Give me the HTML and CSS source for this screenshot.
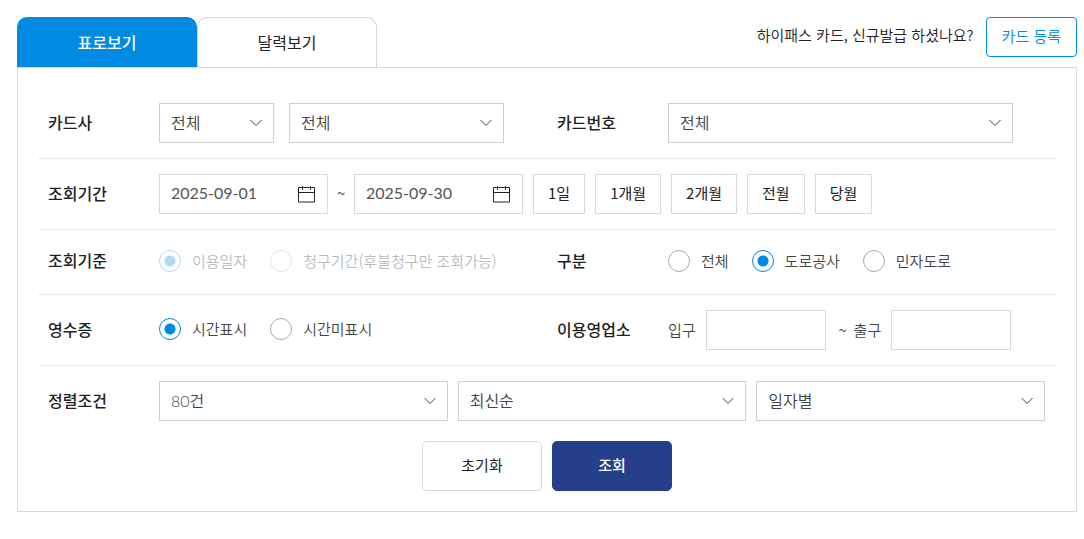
FILE: index.html
```html
<!DOCTYPE html>
<html lang="ko">
<head>
<meta charset="utf-8">
<title>사용내역 조회</title>
<link rel="stylesheet" href="styles.css">
</head>
<body>
<svg class="defs" aria-hidden="true">
  <symbol id="chevron" viewBox="0 0 12 8"><path d="M.5 1 6 6.5 11.5 1" fill="none" stroke="currentColor"/></symbol>
  <symbol id="calendar" viewBox="0 0 17 18"><path d="M.5 2.500h16v14.500H.5zM.5 7.500h16M4.500 1v4M12.500 1v4" fill="none" stroke="currentColor"/></symbol>
</svg>
<main class="page">
  <header class="top">
    <div class="tabs" role="tablist">
      <button class="tab tab-active" type="button" role="tab" aria-selected="true">표로보기</button>
      <button class="tab" type="button" role="tab" aria-selected="false">달력보기</button>
    </div>
    <div class="register">
      <span class="register-text">하이패스 카드, 신규발급 하셨나요?</span>
      <a class="register-link" href="#">카드 등록</a>
    </div>
  </header>
  <form class="panel">
    <div class="row split">
      <div class="field">
        <label class="title" for="company">카드사</label>
        <div class="content pair">
          <div class="select narrow"><select id="company"><option>전체</option></select><svg class="arrow"><use href="#chevron"/></svg></div>
          <div class="select wide"><select aria-label="카드 종류"><option>전체</option></select><svg class="arrow"><use href="#chevron"/></svg></div>
        </div>
      </div>
      <div class="field">
        <label class="title" for="number">카드번호</label>
        <div class="content pair">
          <div class="select wide"><select id="number"><option>전체</option></select><svg class="arrow"><use href="#chevron"/></svg></div>
        </div>
      </div>
    </div>
    <div class="row">
      <div class="field">
        <label class="title" for="from">조회기간</label>
        <div class="content period">
          <div class="date"><input id="from" type="text" value="2025-09-01"><button class="cal" type="button" aria-label="시작일 선택"><svg class="cal-icon"><use href="#calendar"/></svg></button></div>
          <span class="tilde">~</span>
          <div class="date"><input type="text" value="2025-09-30" aria-label="종료일"><button class="cal" type="button" aria-label="종료일 선택"><svg class="cal-icon"><use href="#calendar"/></svg></button></div>
          <div class="quick">
            <button type="button">1일</button>
            <button type="button">1개월</button>
            <button type="button">2개월</button>
            <button type="button">전월</button>
            <button type="button">당월</button>
          </div>
        </div>
      </div>
    </div>
    <div class="row split row-radio">
      <div class="field" role="group" aria-labelledby="t-basis">
        <span class="title" id="t-basis">조회기준</span>
        <div class="content radios">
          <label class="radio"><input type="radio" name="basis" checked disabled><span>이용일자</span></label>
          <label class="radio"><input type="radio" name="basis" disabled><span>청구기간(후불청구만 조회가능)</span></label>
        </div>
      </div>
      <div class="field" role="group" aria-labelledby="t-kind">
        <span class="title" id="t-kind">구분</span>
        <div class="content radios">
          <label class="radio"><input type="radio" name="kind"><span>전체</span></label>
          <label class="radio"><input type="radio" name="kind" checked><span>도로공사</span></label>
          <label class="radio"><input type="radio" name="kind"><span>민자도로</span></label>
        </div>
      </div>
    </div>
    <div class="row split row-receipt">
      <div class="field" role="group" aria-labelledby="t-receipt">
        <span class="title" id="t-receipt">영수증</span>
        <div class="content radios">
          <label class="radio"><input type="radio" name="receipt" checked><span>시간표시</span></label>
          <label class="radio"><input type="radio" name="receipt"><span>시간미표시</span></label>
        </div>
      </div>
      <div class="field" role="group" aria-labelledby="t-office">
        <span class="title" id="t-office">이용영업소</span>
        <div class="content office">
          <label for="enter">입구</label><input class="text" id="enter" type="text">
          <span class="office-tilde">~</span>
          <label for="exit">출구</label><input class="text" id="exit" type="text">
        </div>
      </div>
    </div>
    <div class="row row-last">
      <div class="field">
        <label class="title" for="count">정렬조건</label>
        <div class="content sort">
          <div class="select"><select id="count"><option>80건</option></select><svg class="arrow"><use href="#chevron"/></svg></div>
          <div class="select"><select aria-label="정렬 순서"><option>최신순</option></select><svg class="arrow"><use href="#chevron"/></svg></div>
          <div class="select"><select aria-label="정렬 기준"><option>일자별</option></select><svg class="arrow"><use href="#chevron"/></svg></div>
        </div>
      </div>
    </div>
    <div class="actions">
      <button class="reset" type="reset">초기화</button>
      <button class="search" type="submit">조회</button>
    </div>
  </form>
</main>
</body>
</html>
```

FILE: styles.css
```css
* { box-sizing: border-box; }

body {
  margin: 0;
  background: #fff;
  color: #222;
  font-family: "Noto Sans CJK KR", sans-serif;
  font-size: 15px;
  font-weight: 350;
  line-height: 22px;
}

button, input, select { font: inherit; color: inherit; margin: 0; }
button { cursor: pointer; padding: 0; background: #fff; }
.defs { display: none; }
.page { padding: 17px 7px 27px 17px; }

.top { display: flex; justify-content: space-between; }
.tabs { display: flex; }
.tab {
  width: 180px;
  height: 50px;
  padding-bottom: 2px;
  border: 1px solid #d5d5d5;
  border-bottom: 0;
  border-radius: 10px 10px 0 0;
  font-size: 16px;
  font-weight: 400;
}
.tab-active { background: #008ae2; border-color: #008ae2; color: #fff; font-weight: 500; }
.register { display: flex; align-items: center; align-self: flex-start; gap: 12px; }
.register-text { padding-bottom: 4px; }
.register-link {
  height: 40px;
  padding: 0 15px;
  border: 1px solid #008ae2;
  border-radius: 4px;
  color: #008ae2;
  line-height: 36px;
  text-decoration: none;
}

.panel { padding: 20px; border: 1px solid #d9d9d9; }
.row { padding: 15px 0; border-bottom: 1px solid #ebebeb; }
.row-radio { padding: 19px 0 21px; }
.row-last { padding-bottom: 20px; border-bottom: 0; }
.split { display: grid; grid-template-columns: 1fr 1fr; }
.field { display: flex; align-items: center; min-width: 0; }
.title {
  flex: none;
  width: 121px;
  padding: 0 0 2px 10px;
  font-size: 16px;
  font-weight: 500;
}
.content { display: flex; flex: 1; align-items: center; min-width: 0; color: #444; }

.pair { gap: 15px; padding-right: 43px; }
.sort { gap: 10px; padding-right: 11px; }
.select { position: relative; flex: 1 1 0; min-width: 0; }
.narrow { flex-grow: 23; }
.wide { flex-grow: 43; }
.select select {
  display: block;
  width: 100%;
  height: 40px;
  padding: 0 30px 0 11px;
  border: 1px solid #d0d0d0;
  border-radius: 0;
  background: #fff;
  appearance: none;
  font-family: Lato, "Noto Sans CJK KR", sans-serif;
  font-size: 16px;
  font-weight: 350;
}
.arrow {
  position: absolute;
  top: 16px;
  right: 12px;
  width: 12px;
  height: 8px;
  pointer-events: none;
}

.date {
  display: flex;
  align-items: center;
  width: 169px;
  height: 40px;
  padding: 0 12px 0 11px;
  border: 1px solid #d9d9d9;
}
.date input {
  flex: 1;
  min-width: 0;
  padding: 0 0 2px;
  border: 0;
  background: none;
  color: #555;
  font-family: Lato, sans-serif;
  font-size: 16px;
  font-weight: 400;
}
.cal { height: 18px; border: 0; color: #222; }
.cal-icon { display: block; width: 17px; height: 18px; }
.tilde { width: 26px; padding-bottom: 2px; text-align: center; }
.quick { display: flex; gap: 10px; padding-left: 10px; color: #222; }
.quick button { height: 40px; padding: 0 14px 2px; border: 1px solid #d9d9d9; font-weight: 400; }

.radios { gap: 23px; }
.radio { display: flex; align-items: center; gap: 11px; white-space: nowrap; }
.row-receipt .radios { padding-bottom: 2px; }
.radio input {
  width: 22px;
  height: 22px;
  border: 1px solid #aaa;
  border-radius: 50%;
  background: #fff;
  appearance: none;
}
.radio input:checked {
  border-color: #008ae2;
  background: radial-gradient(circle, #008ae2 5px, #fff 6px);
}
.radio input:disabled { opacity: .3; }
.radio input:disabled + span { color: #bbb; }

.office label { margin-right: 10px; }
.office-tilde { width: 28px; padding-left: 13px; }
.text { width: 120px; height: 40px; padding: 0 10px; border: 1px solid #d9d9d9; background: #fff; }

.actions { display: flex; justify-content: center; gap: 10px; }
.actions button {
  width: 120px;
  height: 50px;
  padding-bottom: 2px;
  border: 1px solid #d9d9d9;
  border-radius: 5px;
  font-weight: 400;
}
.actions .search { border-color: #253f8a; background: #253f8a; color: #fff; font-weight: 500; }
```
